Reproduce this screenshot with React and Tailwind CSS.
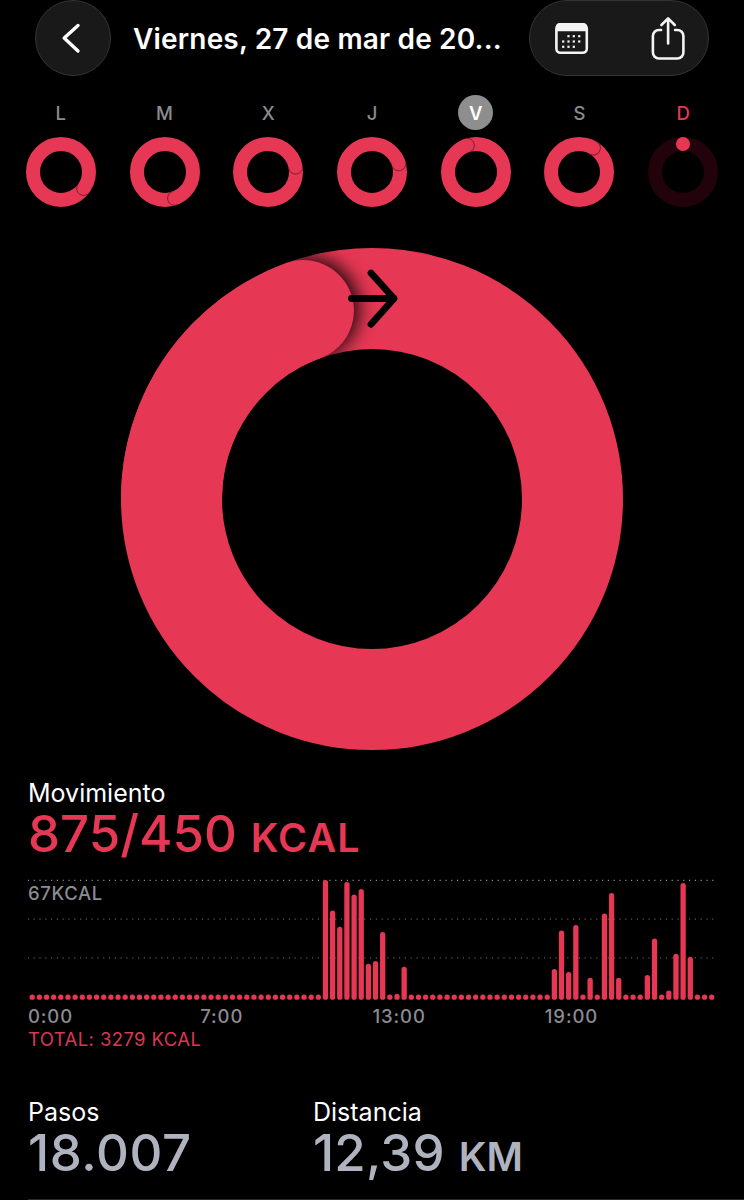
import React from 'react';

const PINK = '#e63754';

const days = [
  { label: 'L', angle: 126 },
  { label: 'M', angle: 160 },
  { label: 'X', angle: 80 },
  { label: 'J', angle: 73 },
  { label: 'V', angle: -18, selected: true },
  { label: 'S', angle: 31 },
  { label: 'D', empty: true },
];

// Height in px of every 15 minute slot that has activity
const activity = {
  41: 119.7, 42: 89.3, 43: 73, 44: 117.7, 45: 105.3, 46: 110.7, 47: 36, 48: 38.7,
  49: 67.7, 51: 6, 52: 33, 73: 30.7, 74: 69.3, 75: 27.7, 76: 74.7, 78: 22,
  80: 86.3, 81: 106.7, 82: 22, 86: 24.7, 87: 61.3, 89: 9.3, 90: 46, 91: 116.7, 92: 43,
};
const bars = Array.from({ length: 96 }, (_, i) => activity[i] || 5.3);

const hours = ['0:00', '7:00', '13:00', '19:00'];

// Dots of the calendar icon, row by row
const calendarDots = [
  [16, 17.7], [21.3, 17.7], [26.7, 17.7],
  [10.7, 23], [16, 23], [21.3, 23], [26.7, 23],
  [10.7, 28.3], [16, 28.3], [21.3, 28.3],
];

const pointAt = (angle, center, radius) => {
  const rad = (angle * Math.PI) / 180;
  return [center + radius * Math.sin(rad), center - radius * Math.cos(rad)];
};

const Header = () => (
  <header className="flex h-[76px] items-center px-[35px]">
    <button className="flex size-[76px] shrink-0 items-center justify-center rounded-full border border-[#343434] bg-[#191919]">
      <svg width="76" height="76" viewBox="0 0 76 76" className="shrink-0" fill="none">
        <path d="M43 25.5L29.2 38L43 51" stroke="white" strokeWidth="3.4" strokeLinecap="round" strokeLinejoin="round" />
      </svg>
    </button>
    <h1 className="ml-[22px] w-[396px] whitespace-nowrap pt-[2px] text-[28px] font-semibold leading-[76px] tracking-[0.17px] text-white">
      Viernes, 27 de mar de 20...
    </h1>
    <div className="flex h-[76px] w-[180px] shrink-0 items-center justify-between rounded-full border border-[#343434] bg-[#191919] pl-[23px] pr-[21px]">
      <svg width="36" height="40" viewBox="0 0 36 40" fill="none">
        <rect x="3.4" y="6.4" width="30.4" height="28.4" rx="4" stroke="#f4f4f4" strokeWidth="2.6" />
        <path d="M3 13.3V9a4 4 0 0 1 4-4h23a4 4 0 0 1 4 4v4.3z" fill="#f4f4f4" />
        {calendarDots.map(([x, y]) => (
          <rect key={`${x}-${y}`} x={x - 1.6} y={y - 0.6} width="2.2" height="2.2" fill="#f4f4f4" />
        ))}
      </svg>
      <svg width="36" height="48" viewBox="0.6 0 36 48" fill="none" stroke="#f4f4f4" strokeWidth="2.6" strokeLinecap="round" strokeLinejoin="round">
        <path d="M10.7 16H8.5a6 6 0 0 0-6 6v16.5a6 6 0 0 0 6 6H27a6 6 0 0 0 6-6V22a6 6 0 0 0-6-6h-2.3" />
        <path d="M17.7 29.5V4.5M11 11L17.7 4.3l6.7 6.7" />
      </svg>
    </div>
  </header>
);

const SmallRing = ({ angle, empty }) => {
  if (empty) {
    return (
      <svg width="70" height="70" viewBox="0 0 70 70" fill="none">
        <circle cx="35" cy="35" r="28" stroke="#22030b" strokeWidth="14" />
        <circle cx="35" cy="7" r="7" fill={PINK} />
      </svg>
    );
  }
  const [x, y] = pointAt(angle, 35, 28);
  return (
    <svg width="70" height="70" viewBox="0 0 70 70" fill="none">
      <circle cx="35" cy="35" r="28" stroke={PINK} strokeWidth="14" />
      {/* only the leading half of the cap has an edge */}
      <path
        d="M0 -7A7 7 0 0 1 0 7"
        transform={`translate(${x} ${y}) rotate(${angle})`}
        stroke="#7d1c30"
        strokeWidth="0.9"
      />
    </svg>
  );
};

const Week = () => (
  <div className="mt-[19px] box-content grid w-[726px] grid-cols-7 pl-[9px]">
    {days.map((day) => (
      <div key={day.label} className="flex flex-col items-center">
        <span
          className={`flex size-[35px] items-center justify-center rounded-full pt-[2px] text-[18.5px] font-medium ${
            day.selected ? 'bg-[#8e8e8e] font-semibold text-white' : day.empty ? 'text-[#e63754]' : 'text-[#8b8b8b]'
          }`}
        >
          {day.label}
        </span>
        <div className="mt-[7px] h-[70px]">
          <SmallRing {...day} />
        </div>
      </div>
    ))}
  </div>
);

const MoveRing = () => {
  const [x, y] = pointAt(-20, 251, 200.5);
  return (
    <svg className="mx-auto mt-[41px] block" width="502" height="502" viewBox="0 0 502 502" fill="none">
      <defs>
        <clipPath id="ring">
          <path clipRule="evenodd" d="M251 0a251 251 0 1 1 0 502a251 251 0 1 1 0-502zM251 101a150 150 0 1 0 0 300a150 150 0 1 0 0-300z" />
        </clipPath>
        <clipPath id="ahead">
          <path d="M170 -10H502V200H210z" />
        </clipPath>
        <filter id="soft" x="-50%" y="-50%" width="200%" height="200%">
          <feGaussianBlur stdDeviation="9" />
        </filter>
      </defs>
      <circle cx="251" cy="251" r="200.5" stroke={PINK} strokeWidth="101" />
      <g clipPath="url(#ring)">
        <g clipPath="url(#ahead)">
          <circle cx={x + 4} cy={y - 2} r="52" fill="black" fillOpacity="0.85" filter="url(#soft)" />
        </g>
      </g>
      {/* end of the second lap, drawn over its own shadow */}
      <path d="M50.5 251A200.5 200.5 0 0 1 182.43 62.59" stroke={PINK} strokeWidth="101" />
      <circle cx={x} cy={y} r="50.5" fill={PINK} />
      <path
        d="M230.5 50.5H273M250 25L273 50.5L250 76.3"
        stroke="black"
        strokeWidth="6.8"
        strokeLinecap="round"
        strokeLinejoin="round"
      />
    </svg>
  );
};

const Chart = () => (
  <div className="relative mt-[10px] h-[134px]">
    <svg width="716" height="134" viewBox="28 870 716 134" className="block">
      {[880.3, 919.2, 957.9].map((y, i) => (
        <line
          key={y}
          x1="27.8"
          x2="714"
          y1={y}
          y2={y}
          stroke={i === 0 ? '#8a8a8a' : '#5a5a5a'}
          strokeWidth="1.2"
          strokeDasharray="1.2 4.6"
        />
      ))}
      {bars.map((height, i) => (
        <rect key={i} x={29.55 + i * 7.153} y={999.8 - height} width="5.3" height={height} rx="2.65" fill={PINK} />
      ))}
    </svg>
    <span className="absolute left-0 top-[11px] text-[18.5px] font-medium leading-6 tracking-[0.65px] text-[#8b8b90]">67KCAL</span>
  </div>
);

const App = () => {
  return (
    <div className="h-[1200px] w-[744px] overflow-hidden bg-black font-['Inter',sans-serif]">
      <Header />
      <Week />
      <MoveRing />

      <section className="pl-7 pt-[29px]">
        <h2 className="h-7 text-[25px] leading-7 text-white">Movimiento</h2>
        <p className="h-[53px] whitespace-nowrap text-[51px] font-medium leading-[53px] text-[#e63754]">
          875/450 <span className="text-[39.5px] font-semibold tracking-[1.2px]">KCAL</span>
        </p>
        <Chart />
        <div className="grid w-[689px] grid-cols-4 text-[18.5px] font-medium leading-6 tracking-[0.9px] text-[#8b8b90]">
          {hours.map((hour) => (
            <span key={hour}>{hour}</span>
          ))}
        </div>
        <p className="text-[18.5px] leading-[22px] tracking-[0.4px] text-[#dc3655]">TOTAL: 3279 KCAL</p>
      </section>

      <section className="mt-12 grid grid-cols-[285px_1fr] pl-7">
        <div>
          <h2 className="h-7 text-[25px] leading-7 text-white">Pasos</h2>
          <p className="h-[54px] text-[51px] font-medium leading-[54px] tracking-[0.6px] text-[#afb3bf]">18.007</p>
        </div>
        <div>
          <h2 className="h-7 text-[25px] leading-7 text-white">Distancia</h2>
          <p className="h-[54px] text-[51px] font-medium leading-[54px] tracking-[0.2px] text-[#afb3bf]">
            12,39 <span className="text-[39.5px] font-semibold tracking-normal">KM</span>
          </p>
        </div>
      </section>
      <div className="ml-7 mt-[19px] h-px bg-[#2a2a2a]" />
    </div>
  );
};

export default App;
